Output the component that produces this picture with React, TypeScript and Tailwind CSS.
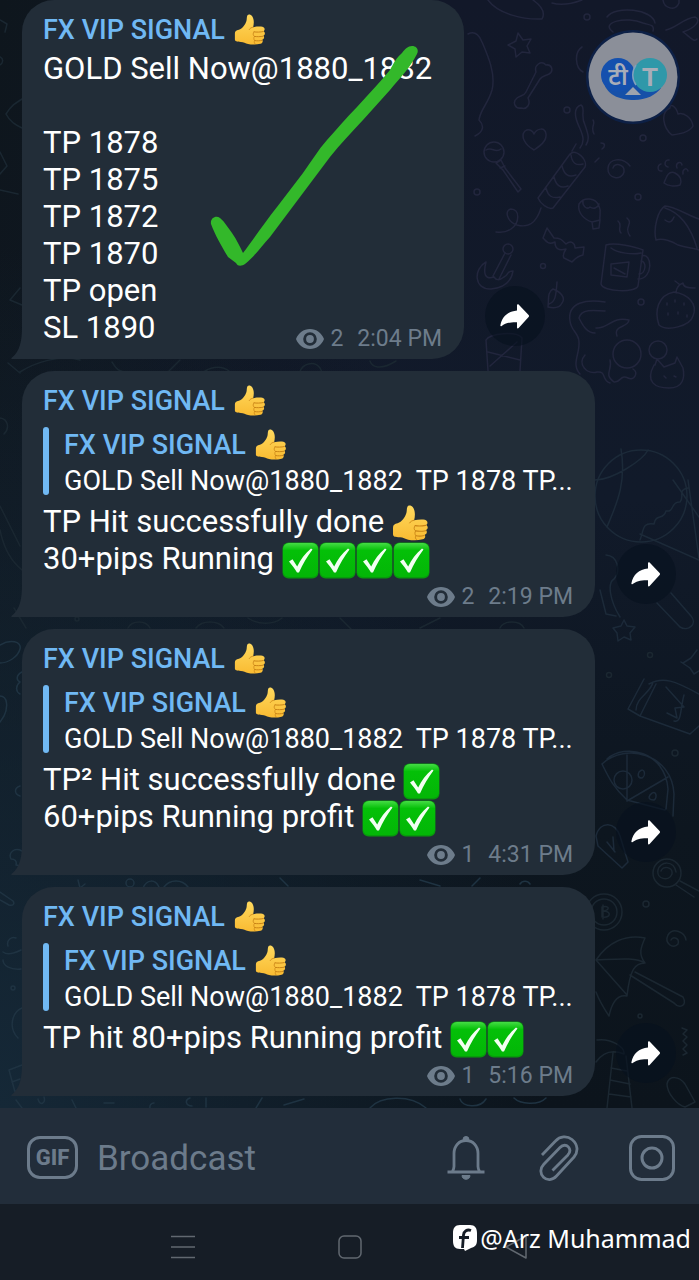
import type { ReactNode } from "react";

type Message = {
  id: number;
  views: number;
  time: string;
  quoted: boolean;
  lines: ReactNode[];
  ticked?: boolean;
};

function ThumbsUp({ className }: { className: string }) {
  return (
    <svg viewBox="0 0 36 36" role="img" aria-label="👍" className={className}>
      <defs>
        <linearGradient id="skin" x1="0" y1="0" x2="0" y2="1">
          <stop offset="0" stopColor="#ffd95e" />
          <stop offset="1" stopColor="#f9bb32" />
        </linearGradient>
      </defs>
      <path
        d="M1 22c0-2.600 1.500-3.600 4.500-4.200 4-1.300 7.300-6 8.500-10 .6-2.300.2-4.500 1-6.200.9-1.800 4-1.300 5.300.6 2.500 3.500 2.300 8.300 1.200 12.600 3.300-.6 7.500-.9 10.500-.4 2.700.6 3.300 3.700 1.300 5 2 1.200 1.900 4-.2 5 1.400 1.300.9 4-1.300 4.600 1.200 1.700.2 3.900-2 4.400-4.500 1.200-10 1.300-14 .3-3-.8-5-2.100-8-2.300C3 31.200 1 31 1 28.500z"
        fill="url(#skin)"
      />
      <g fill="none" stroke="#c98316" strokeWidth="1.100" strokeLinecap="round">
        <path d="M32.800 19.800c-3 .6-7.500.8-10.300.3M32.700 25c-3 .6-7 .7-9.700.2M31.300 29.700c-2.500.6-5.500.7-8 .2" />
        <path d="M21.500 14.800c-2 .4-3.600 1.200-4.300 2.600M22.500 20.100c-1.500 1.300-1.300 4 .5 5.100-1 1.300-.8 3.600.3 4.700-.9 1.200-.6 2.800.4 3.700" strokeWidth=".9" />
      </g>
    </svg>
  );
}

function CheckBox() {
  return (
    <svg
      viewBox="0 0 37 37"
      role="img"
      aria-label="✅"
      className="-my-1 inline-block h-[37px] w-[37px] align-middle"
    >
      <defs>
        <linearGradient id="gloss" x1="0" y1="0" x2="0" y2="1">
          <stop offset="0" stopColor="#45dc45" />
          <stop offset=".22" stopColor="#04c008" />
          <stop offset="1" stopColor="#03b607" />
        </linearGradient>
      </defs>
      <rect x=".5" y=".5" width="36" height="36" rx="6" fill="#089a0c" />
      <rect x="1" y="1" width="35" height="34" rx="6" fill="url(#gloss)" />
      <path d="M7 19.500l3.500-2.200 4.700 7.300C18.500 17.500 23 11.500 29 6.500l1.500 1C25.500 14 20.700 22 17 30.500h-2C12.500 26.500 10 23 7 19.500z" fill="#f2fff2" />
    </svg>
  );
}

function LineThumb() {
  return <ThumbsUp className="-my-1 inline-block h-[37px] w-[37px] align-middle" />;
}

function Sender() {
  return (
    <span className="flex items-center gap-[9px] text-[27px] leading-9 font-medium text-[#70b8f3]">
      FX VIP SIGNAL
      <ThumbsUp className="h-8 w-8" />
    </span>
  );
}

const MESSAGES: Message[] = [
  {
    id: 1,
    views: 2,
    time: "2:04 PM",
    quoted: false,
    ticked: true,
    lines: [
      "GOLD Sell Now@1880_1882",
      "\u00a0",
      "TP 1878",
      "TP 1875",
      "TP 1872",
      "TP 1870",
      "TP open",
      "SL 1890",
    ],
  },
  {
    id: 2,
    views: 2,
    time: "2:19 PM",
    quoted: true,
    lines: [
      <>TP Hit successfully done <LineThumb /></>,
      <>30+pips Running <CheckBox /><CheckBox /><CheckBox /><CheckBox /></>,
    ],
  },
  {
    id: 3,
    views: 1,
    time: "4:31 PM",
    quoted: true,
    lines: [
      <>TP² Hit successfully done <CheckBox /></>,
      <>60+pips Running profit <CheckBox /><CheckBox /></>,
    ],
  },
  {
    id: 4,
    views: 1,
    time: "5:16 PM",
    quoted: true,
    lines: [<>TP hit 80+pips Running profit <CheckBox /><CheckBox /></>],
  },
];

function MessageRow({ message }: { message: Message }) {
  return (
    <li className="flex items-end gap-[21px] pr-4 pl-[22px]">
      <article
        className={`relative min-w-0 flex-1 rounded-t-[32px] rounded-br-[32px] bg-[#222d38] pt-3 pr-4 pb-[5px] pl-[21px] ${
          message.quoted ? "max-w-[573px]" : "max-w-[442px]"
        }`}
      >
        {/* tail */}
        <svg viewBox="0 0 12 32" className="absolute bottom-0 -left-[11px] h-8 w-3 fill-[#222d38]" aria-hidden="true">
          <path d="M12 0H11C11 14 9 24 1 30.500C0 31.200 0 32 1 32H12z" />
        </svg>

        <h2 className="mb-[2px]">
          <Sender />
        </h2>

        {message.quoted && (
          <blockquote className="mt-2 mb-1 flex gap-[15px]">
            <span className="mb-1 w-[6px] shrink-0 rounded-[3px] bg-[#70b8f3]" />
            <div className="min-w-0">
              <Sender />
              <p className="truncate text-[27px] leading-9 whitespace-pre text-white">
                {"GOLD Sell Now@1880_1882  TP 1878 TP..."}
              </p>
            </div>
          </blockquote>
        )}

        <div className="text-[31px] leading-[37px] whitespace-nowrap text-white">
          {message.lines.map((line, i) => (
            <p key={i} className="h-[37px]">
              {line}
            </p>
          ))}
        </div>

        <footer
          className={`flex items-center justify-end pr-[6px] text-[23px] leading-[30px] text-[#6d7c8b] ${
            message.quoted ? "mt-[5px]" : "-mt-[22px]"
          }`}
        >
          <svg viewBox="0 0 28 20" className="mr-[6px] h-5 w-7" aria-label="Views">
            <path
              fillRule="evenodd"
              fill="currentColor"
              d="M14 0C7.500 0 2.300 4 0 10c2.300 6 7.500 10 14 10s11.700-4 14-10C25.700 4 20.500 0 14 0zm0 3.200a6.800 6.800 0 1 1 0 13.600 6.800 6.800 0 0 1 0-13.600zM14 6.100a3.900 3.900 0 1 0 0 7.800 3.900 3.900 0 0 0 0-7.800z"
            />
          </svg>
          <span className="mr-[14px]">{message.views}</span>
          <time>{message.time}</time>
        </footer>

        {message.ticked && (
          <svg
            viewBox="0 0 208 224"
            className="absolute top-[44px] left-[188px] h-[224px] w-[208px] fill-[#33b82a]"
            aria-label="Done"
          >
            <path d="M1 180C0 174 6 171 10 174C15 178 18 184 22 189C27 196 30 203 33 209C43 196 55 178 67 163L93 129C101 118 108 106 117 96C127 85 136 74 147 63C158 51 170 38 180 26C183 20 187 13 192 9C195 5 198 2 202 2C207 2 209 6 207 10C200 24 190 34 180 46L153 76C142 88 130 100 120 113L90 153L60 193C51 203 44 213 35 220C32 222 28 223 26 219L18 213C12 203 5 191 1 180z" />
          </svg>
        )}
      </article>

      <button
        type="button"
        aria-label="Forward"
        className="mb-[13px] flex h-[60px] w-[60px] shrink-0 items-center justify-center rounded-full bg-[#07101e]/60"
      >
        <svg viewBox="0 0 30 25" className="h-[25px] w-[30px] fill-white" aria-hidden="true">
          <path d="M17 1.200c0-1 .9-1.200 1.600-.6L28.600 11c.6.700.6 1.300 0 2L18.600 24c-.7.700-1.600.400-1.600-.6V18.200C9.500 18 5 19.300 1.700 22c-.8.6-1.500.300-1.300-.7C2 12.500 8 7.400 17 6.500z" />
        </svg>
      </button>
    </li>
  );
}

function Wallpaper() {
  return (
    <svg
      viewBox="0 0 699 1108"
      preserveAspectRatio="xMaxYMin slice"
      className="absolute inset-0 h-full w-full"
      fill="none"
      strokeWidth="1.500"
      strokeLinecap="round"
      strokeLinejoin="round"
      aria-hidden="true"
    >
      <g stroke="#22263d">
        <path d="M488 0c10 14 36 20 54 19 4-7-2-14-9-19M552 3c10 3 22 0 30-3M663 0c1 8 12 12 16 3V0M468 34c8-4 12 3 14 8 6 14 14 32 10 48-4 14-12 20-13 30 6 6 4 12-4 16" />
        <path d="M518 33l5 7 8-1-4 7 3 7-8-1-6 5-1-8-7-4 8-4zM536 72c-2-7 5-12 10-7 6-1 8 6 3 9-4 2-7 2-9 5L528 98c3 6-1 12-7 10-6 1-9-6-4-10 4-3 7-2 9-6z" />
        <path d="M534 150c-9-5-14-14-9-19 4-3 8 0 9 3 3-6 11-7 12 0 1 7-6 12-12 16z" />
        <circle cx="494" cy="152" r="10" />
        <path d="M486 150c6-4 9 4 15-1M496 163l5-3 4 8 16 21-3 3-15-22zM500 168l5-2" />
        <path d="M538 198l32-44c6-6 18 6 15 13l-32 41c-5 2-13-5-15-10zM546 188c2 8 6 11 14 9M554 177c2 8 6 12 14 9M562 166c2 8 6 12 14 9M571 155c1 8 5 11 12 9M541 208c-5 16-13 20-24 17-10-3-13-15-6-16 9 0 9 14 0 20-4 3-8 4-15 3M572 151l4-7M580 148c8-10-2-20-4-30-2-9 2-12 5-13 5 3-1 11 4 20 3 9 5 14 1 20M593 120c3 4-3 7 1 14M601 143c5 0 4 4 1 6M595 162l4-4" />
        <path d="M613 168c1-6 12-4 11 4-2 9-17 7-16-4 1-9 14-12 22-2" />
        <path d="M664 183c2-5 4-13 11-10 6 3 7 8 5 12-5 2-12 1-16-2zM662 171c-5 1-5-6-1-7M668 167c-5-1-3-8 1-7M677 168c-2-5 4-8 5-3M683 174c-1-5 4-7 5-3" />
        <path d="M579 204c5-8 17-6 20 2 3 6 0 10 1 14l-8 2c-7-2-15-9-13-18zM583 201c-1 5 4 9 7 6 4 3 8 0 9-3M592 222l1 7 6-1 1-8" />
        <path d="M543 238l4-10 7 10c6 0 7 1 12 6 5-4 9-1 9 4l9-1-1 8c-6 1-9 5-11 7l-8-4c-2-3 0-6 2-9-7 2-11 0-11-7-4 2-7 2-10-2zM618 221c5 4-1 8 3 12M627 218c7 6-4 9 3 18" />
        <path d="M606 245c9-3 30 2 37 5l-5 36c-2 7-35 6-37-2zM611 248c6 5 22 7 30 5M642 256c10-4 12 23-4 23M641 261c6 0 5 13-2 13M611 264l18-2-2 15-16-2zM614 268l11 6" />
        <path d="M656 240c-3-12 2-30 9-34 9 0 24 10 34 13M656 240c7-2 16 1 22 5 9 3 17 3 21 5M665 220c6 5 8-1 9-3M665 208c16 5 26 20 32 40" />
        <circle cx="508" cy="249" r="5" />
        <path d="M505 253l-12 23M511 255l-12 24M486 262c-13 7-12 28 5 27 9-1 20-4 22-18-7 0-4 4-9 6-5 4-8 3-10 0-9 3-11-3-8-15z" />
        <path d="M548 307c1-7-1-15 5-18 8 3 13 9 9 14-3 6-10 5-14 4zM549 304c6-2 7-7 8-22" />
        <path d="M659 325c-5-14-1-30 15-33 14 2 24 12 19 24-3 10-26 16-34 9zM676 293c0-5 2-8 7-10 0 4 4 5 12 5M679 284l-4-3M667 303v2M675 300v2M684 303v2M668 313v2M678 312v2M687 315v2" />
        <path d="M605 302c-18-3-38 0-35 19 1 10 9 12 9 21 1 12-8 22 1 32M605 311c-12-1-24-2-26 7 4 8 8 15 16 15M596 328c13 1 15-12 33-8-1 8-16 5-12 16M585 355c-8 9 2 20 12 17 10-1 4 8 13 11M610 360c3 10-7 14 4 22 7 1 6-8 14-4 6 3 11-5 5-9" />
        <circle cx="627" cy="354" r="14" />
        <circle cx="658" cy="350" r="9" />
        <path d="M655 365l2-6 7 8 11-4 2-6 6 11c2 10 0 20-14 20s-24-6-15-23zM664 376l2 2M674 376l2 1" />
        <path d="M486 340c4-7 31-9 36-2l-2 33M486 340l2 31M488 352l32 8M490 366l27-24M670 108c-10 4-7 20 2 27 9-1 18-3 21-9-1-8-9-14-15-12-2-8-8-11-8-6M613 32c-14-10 14-16 30-9 5 2 12 1 10 8M607 17c8-12 46-8 48 6M666 30c10-2 18-12 29-13 7 3 0 11-12 15 6 4 11 11 14 7M583 72c-8-4-9-20-1-25" />
        <circle cx="587" cy="17" r="3" /><circle cx="567" cy="110" r="3" /><circle cx="477" cy="192" r="3" />
        <circle cx="638" cy="197" r="3" /><circle cx="643" cy="138" r="3" /><circle cx="543" cy="266" r="2.500" /><circle cx="641" cy="302" r="3" />
      </g>

      <g stroke="#1c2a39">
        <circle cx="641" cy="496" r="46" />
        <path d="M595 480c18 0 48-20 53-30M607 527c8-20 20-42 14-78M640 540c4-10 2-18 14-16 2-11 9-3 12-13 9 1 4-9 14-9 5-5-3-12 8-14M688 480l11 78M640 534l59 26M699 517l-26-37M606 555c12 1 15 16 8 24-7 4-4 22 6 38M600 590l6 24 10 2M657 603l23 24c8 5 18-3 11-11l-20-23" />
        <path d="M624 620l3 6 8 1-5 6 1 7-7-3-6 4-1-8-4-5 8-2zM683 663l8-5 6-8M681 662l9 6 4 6 5-3" />
        <path d="M644 679l-16 30 12 7 16-32M640 716l50 18 9-8M649 684c14-8 26-3 50 10M653 682c-2 11-17 15-17 28M666 687l18 20-9 1 2 10-10-5M684 695c-4 14-2 28-10 26" />
        <path d="M602 764c24-22 70-10 72 30l-1 22M602 764c7 14 11 23 25 36l38 10M607 759c18-16 58-8 61 30l-2 20M627 755v45M668 777l-41 24" />
        <circle cx="623" cy="780" r="9" /><path d="M639 772c6-6 7 4 3 6-5 0-4-4-3-6zM650 795c6-7 8 3 4 5-5 0-6-2-4-5z" />
        <path d="M596 836c4-16 20-14 24 0l8 26-6 6-24-22zM607 842l8 10M613 837l1 14" />
      </g>
      <g stroke="#1b2731">
        <circle cx="667" cy="873" r="14" /><path d="M661 871c2-6 12-4 11 3-3 8-16 5-14-4 2-9 16-10 18 2M680 881l19 10M676 885l18 12" />
        <circle cx="604" cy="912" r="13" /><circle cx="604" cy="912" r="18" /><path d="M602 907c8-2 8 3 1 4 9 0 8 7-1 6zM603 905v14" />
        <path d="M671 940c2-4 9-2 7 4-5 6-14-1-10-9 5-8 17-3 18 5" />
        <path d="M596 960c12-18 30-26 49-22-4 9-7 16 0 25-10 0-15 6-18 33-10-2-15 6-18 20-6-9-10-16-13-24M596 960c22-1 40-3 49 3M596 960l31 35M630 975l44 28c5 6 14 3 9-6l-48-25" />
        <path d="M597 1040c14-2 28 7 27 14-12-5-21-2-28 8M613 1053l-6 55M626 1056l6 52M611 1068l16 3M610 1080l20 4M609 1094l22 3M682 1028l5 2-4 4 4 3-4 4 4 4-4 4 4 4-4 2M667 1084c2-9 12-8 18 0l10 18-10 5c-8-2-18-14-18-23z" />
        <circle cx="650" cy="655" r="2.500" /><circle cx="609" cy="675" r="2.500" /><circle cx="675" cy="753" r="3" /><circle cx="646" cy="904" r="3" /><circle cx="640" cy="1016" r="2" />
      </g>

      {/* left edge and the gaps between bubbles */}
      <g stroke="#1a2731">
        <path d="M0 20l7 4-2 8M0 57c4 2 3 6 0 8M6 114c5-8 8-10 16-15M6 114c4 8 10 11 16 14M0 152l7 14-7 8M0 190l18 4M20 288l-10 12 12 5M8 363l12 10M0 418c8 1 10 10 4 16M0 530c4 20 12 32 22 40M0 506l20 40" />
        <path d="M20 372c14-9 40-18 60-12M112 362c4 6 6 10 16 10M180 360l-12 12M205 371c8-5 18-5 24 0M300 372c2-8 14-12 20-4l2 4M370 361c2 6 10 10 26 0M14 608l12 20M128 628c4-8 18-8 22 0M196 628c6-8 22-8 28 0M248 618c10 7 26 7 34 0M340 618l12 12M420 628l20-10M500 628c4-8 20-8 24 0" />
        <circle cx="77" cy="619" r="2" />
      </g>
      <g stroke="#1f3342">
        <path d="M0 645c10-6 22-4 20 4-2 8-12 14-20 14M0 696c8 0 8 12 4 20l-4 6M22 672c-6 3-6 8-2 10-5 4-4 10 0 12M20 786c-6 2-6 8 0 10M22 851c-8-4-14 2-11 8 4 0 6 2 5 6 4 1 6 0 6-3M0 892l13 9c2 3 0 5-4 4l-9-5M8 946c-2-6 4-10 8-8M3 952c4 3 10 2 18-2M3 960c0 6 8 10 18 9M22 1008c-10 4-14 20-4 30M9 1070l13-5M9 1070l6 22 7-6M12 1082l8-3" />
        <circle cx="13" cy="988" r="2" />
        <path d="M16 1100l6 8M38 1099c2 8 8 4 6-2M72 1100l4 8M104 1103h10M150 1108a4 4 0 0 1 4-5M190 1098c-6 2-4 8 2 8M206 1098v9M262 1098l-6 10M284 1105l20-6M370 1108c10-12 40-14 56 0M460 1099c2 8 20 10 26 0M514 1098c6 6 24 8 32 0M78 880l2 8 5-4M143 888c4-9 12-9 16-1M164 887c6-8 18-8 24 0M280 878l8 8M420 880l20 6M480 878l-8 8M520 884a6 6 0 0 1 10 0" />
        <circle cx="130" cy="883" r="4" />
      </g>
    </svg>
  );
}

function WatermarkLogo() {
  return (
    <svg viewBox="0 0 96 96" className="absolute top-[29px] right-[18px] h-24 w-24" role="img" aria-label="टी T">
      <circle cx="48" cy="48" r="47" fill="#0c2350" opacity=".75" />
      <circle cx="48" cy="48" r="44.500" fill="#8b8f99" />
      <path d="M18 50c2 16 17 21 31 21 12 0 22-5 27-12L60 50z" fill="#1650a8" />
      <circle cx="33" cy="46" r="17" fill="#1450ae" />
      <path d="M40 66l8-8 8 8z" fill="#9da3ad" />
      <circle cx="65" cy="46" r="17" fill="#2f98a9" />
      <path d="M51 36a17 17 0 0 0 0 20" fill="none" stroke="#7fa0bd" strokeWidth="1.500" />
      <g fill="#a9adb8" textAnchor="middle">
        <text x="33" y="56" fontSize="24" fontWeight="600" fontFamily="'Noto Sans', 'Noto Sans Devanagari', sans-serif">टी</text>
        <text x="65" y="57" fontSize="26" fontWeight="700" fontFamily="'Liberation Sans', sans-serif">T</text>
      </g>
    </svg>
  );
}

function Composer() {
  return (
    <form className="flex h-24 items-center bg-[#222d3a] pt-[3px] pr-6 pl-[27px] text-[#6c7b8b]">
      <button
        type="button"
        className="flex h-[43px] w-[51px] shrink-0 items-center justify-center rounded-[13px] border-[3px] border-current text-[22px] leading-none font-extrabold"
      >
        GIF
      </button>
      <input
        type="text"
        aria-label="Broadcast"
        placeholder="Broadcast"
        className="ml-[19px] min-w-0 flex-1 bg-transparent pt-1 text-[35px] outline-none placeholder:text-[#6c7b8b]"
      />
      <div className="flex shrink-0 items-center gap-[47px]">
        <button type="button" aria-label="Notifications">
          <svg viewBox="0 0 46 46" className="h-[46px] w-[46px]" fill="none" stroke="currentColor" strokeWidth="2.800">
            <path d="M4.500 37h37M9.500 36.500c1-2 1.500-3 1.500-5V18.500C11 11 16 5.500 23 5.500S35 11 35 18.500v13c0 2 .5 3 1.500 5" />
            <path d="M19 40.500h8c0 5-8 5-8 0zM20 4.500a3 3 0 0 1 6 0z" fill="currentColor" strokeWidth="1" />
          </svg>
        </button>
        <button type="button" aria-label="Attach">
          <svg viewBox="0 0 46 46" className="h-[46px] w-[46px]" fill="none" stroke="currentColor" strokeWidth="2.800" strokeLinejoin="round">
            <path d="M6 20L19.500 6C24 1 31 .5 36 4.500c6 5 6.500 12 2 17.500L20.500 41c-4 4.500-9.500 4.500-13 1.200-3.500-3.400-3.700-8.700.3-12.900L24 12.500c3-3.200 6.500-2.600 8.300-.6 2 2.200 2.100 5.200-.4 8L16.500 35.500" />
          </svg>
        </button>
        <button type="button" aria-label="Camera">
          <svg viewBox="0 0 46 46" className="h-[46px] w-[46px]" fill="none" stroke="currentColor" strokeWidth="3">
            <rect x="1.500" y="1.500" width="43" height="43" rx="11" />
            <circle cx="23" cy="23" r="10" />
          </svg>
        </button>
      </div>
    </form>
  );
}

function NavBar() {
  return (
    <nav className="relative flex h-[76px] items-center justify-center gap-[143px] bg-[#161d26] pt-[10px] text-[#616870]">
      <button type="button" aria-label="Recent apps">
        <svg viewBox="0 0 24 24" className="h-6 w-6" stroke="currentColor" strokeWidth="1.700">
          <path d="M0 1.500h24M0 12h24M0 22.500h24" />
        </svg>
      </button>
      <button type="button" aria-label="Home">
        <svg viewBox="0 0 24 24" className="h-6 w-6" fill="none" stroke="currentColor" strokeWidth="1.500">
          <rect x="1" y="1" width="22" height="22" rx="5" />
        </svg>
      </button>
      <button type="button" aria-label="Back">
        <svg viewBox="0 0 24 24" className="h-6 w-6" fill="none" stroke="currentColor" strokeWidth="1.500" strokeLinejoin="round">
          <path d="M1 12L21 1v22z" />
        </svg>
      </button>

      <p className="absolute right-2 bottom-[22px] flex items-center gap-[3px] font-['Noto_Sans'] text-[25px] leading-10 text-white">
        <svg viewBox="0 0 24 26" className="h-[26px] w-6" aria-hidden="true">
          <path d="M7 0h10c5 0 7 3 7 8v7c0 5-2 7-6 8l-6 3-1-2H7c-5 0-7-3-7-8V8c0-5 2-8 7-8z" fill="#fff" />
          <path d="M18 5.500c-4-1.500-7 .5-7.500 4.500l-1 13M6 12.500h10" fill="none" stroke="#161d26" strokeWidth="2.800" />
        </svg>
        @Arz Muhammad
      </p>
    </nav>
  );
}

export default function App() {
  return (
    <div className="flex min-h-screen flex-col bg-[#161d26] font-[Roboto,'Liberation_Sans',sans-serif]">
      <main className="relative flex-1 bg-[radial-gradient(ellipse_at_bottom_left,#152837_0%,transparent_55%),linear-gradient(100deg,#0e161d_0%,transparent_50%),linear-gradient(180deg,#121829_0%,#111a2a_45%,#0d161f_75%,#0c141c_100%)]">
        <Wallpaper />
        <ul className="relative flex flex-col gap-3 pb-[11px]">
          {MESSAGES.map((message) => (
            <MessageRow key={message.id} message={message} />
          ))}
        </ul>
        <WatermarkLogo />
      </main>
      <Composer />
      <NavBar />
    </div>
  );
}
